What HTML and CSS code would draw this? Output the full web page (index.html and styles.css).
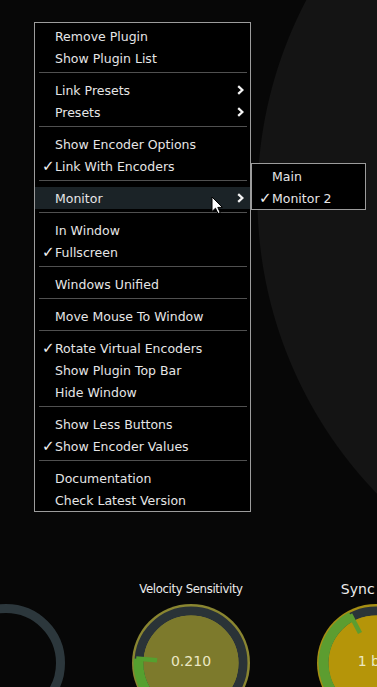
FILE: index.html
```html
<!DOCTYPE html>
<html lang="en">
<head>
  <meta charset="UTF-8" />
  <meta name="viewport" content="width=device-width, initial-scale=1" />
  <title>Plugin Menu</title>
  <link rel="stylesheet" href="styles.css">
</head>
<body>

<div class="view">
  <div class="display"></div>

  <div class="encoders">
    <div class="encoder">
      <div class="encoder-label"></div>
      <svg class="knob" viewBox="0 0 118 118" width="118" height="118">
        <circle cx="59" cy="59" r="54.5" fill="none" stroke="#2c373c" stroke-width="9"/>
      </svg>
    </div>

    <div class="encoder">
      <div class="encoder-label encoder-label-long">Velocity Sensitivity</div>
      <svg class="knob" viewBox="0 0 118 118" width="118" height="118">
        <circle cx="59" cy="59" r="59" fill="#8a8631"/>
        <circle cx="59" cy="59" r="52" fill="none" stroke="#2a3337" stroke-width="9"/>
        <circle cx="59" cy="59" r="47.5" fill="#7d7a2c"/>
        <path d="M21.88 96.12 A52.5 52.5 0 0 1 6.67 54.79" fill="none" stroke="#55a02f" stroke-width="10"/>
        <line x1="4.2" y1="54.6" x2="25.1" y2="56.3" stroke="#55a02f" stroke-width="4.5"/>
        <text class="knob-value" x="59" y="62" text-anchor="middle">0.210</text>
      </svg>
    </div>

    <div class="encoder">
      <div class="encoder-label">Sync Rate</div>
      <svg class="knob" viewBox="0 0 118 118" width="118" height="118">
        <circle cx="59" cy="59" r="59" fill="#a58e14"/>
        <circle cx="59" cy="59" r="52" fill="none" stroke="#2a3438" stroke-width="9"/>
        <circle cx="59" cy="59" r="47.5" fill="#b59509"/>
        <path d="M21.88 96.12 A52.5 52.5 0 0 1 34.35 12.65" fill="none" stroke="#5c9d30" stroke-width="10"/>
        <line x1="33.2" y1="10.4" x2="43" y2="29" stroke="#5c9d30" stroke-width="4.5"/>
        <text class="knob-value" x="59" y="62" text-anchor="middle">1 bar</text>
      </svg>
    </div>
  </div>
</div>

<div class="context-menu">
  <div class="menu-item"><span class="mark"></span><span class="item-label">Remove Plugin</span></div>
  <div class="menu-item"><span class="mark"></span><span class="item-label">Show Plugin List</span></div>
  <div class="separator"></div>
  <div class="menu-item"><span class="mark"></span><span class="item-label">Link Presets</span>
    <svg class="arrow" viewBox="0 0 7 10" width="7" height="10"><polyline points="1.2,1.2 5.4,5 1.2,8.8"/></svg></div>
  <div class="menu-item"><span class="mark"></span><span class="item-label">Presets</span>
    <svg class="arrow" viewBox="0 0 7 10" width="7" height="10"><polyline points="1.2,1.2 5.4,5 1.2,8.8"/></svg></div>
  <div class="separator"></div>
  <div class="menu-item"><span class="mark"></span><span class="item-label">Show Encoder Options</span></div>
  <div class="menu-item"><span class="mark">✓</span><span class="item-label">Link With Encoders</span></div>
  <div class="separator"></div>
  <div class="menu-item active"><span class="mark"></span><span class="item-label">Monitor</span>
    <svg class="arrow" viewBox="0 0 7 10" width="7" height="10"><polyline points="1.2,1.2 5.4,5 1.2,8.8"/></svg></div>
  <div class="separator"></div>
  <div class="menu-item"><span class="mark"></span><span class="item-label">In Window</span></div>
  <div class="menu-item"><span class="mark">✓</span><span class="item-label">Fullscreen</span></div>
  <div class="separator"></div>
  <div class="menu-item"><span class="mark"></span><span class="item-label">Windows Unified</span></div>
  <div class="separator"></div>
  <div class="menu-item"><span class="mark"></span><span class="item-label">Move Mouse To Window</span></div>
  <div class="separator"></div>
  <div class="menu-item"><span class="mark">✓</span><span class="item-label">Rotate Virtual Encoders</span></div>
  <div class="menu-item"><span class="mark"></span><span class="item-label">Show Plugin Top Bar</span></div>
  <div class="menu-item"><span class="mark"></span><span class="item-label">Hide Window</span></div>
  <div class="separator"></div>
  <div class="menu-item"><span class="mark"></span><span class="item-label">Show Less Buttons</span></div>
  <div class="menu-item"><span class="mark">✓</span><span class="item-label">Show Encoder Values</span></div>
  <div class="separator"></div>
  <div class="menu-item"><span class="mark"></span><span class="item-label">Documentation</span></div>
  <div class="menu-item"><span class="mark"></span><span class="item-label">Check Latest Version</span></div>
</div>

<div class="context-menu submenu">
  <div class="menu-item"><span class="mark"></span><span class="item-label">Main</span></div>
  <div class="menu-item"><span class="mark">✓</span><span class="item-label">Monitor 2</span></div>
</div>

<svg class="cursor" viewBox="0 0 13 19" width="13" height="19">
  <path d="M1 1 L1 15.5 L4.5 12.2 L7 17.6 L9.2 16.6 L6.8 11.4 L11.4 11.4 Z" fill="#fff" stroke="#000" stroke-width="1"/>
</svg>

</body>
</html>
```

FILE: styles.css
```css
body {
  margin: 0;
  padding: 0;
  font-family: 'DejaVu Sans', Verdana, sans-serif;
  color: #e6e6e6;
  background: radial-gradient(circle 426px at 683px 198px, #141414 425px, #070707 426px);
  background-color: #070707;
  overflow: hidden;
}

.view {
  height: 100vh;
  display: flex;
  flex-direction: column;
  overflow: hidden;
}

.display {
  flex: 0 0 581px;
}

.encoders {
  display: flex;
  gap: 67px;
  margin-left: -53px;
}

.encoder {
  flex: 0 0 118px;
  display: flex;
  flex-direction: column;
  align-items: center;
  gap: 7px;
}

.encoder-label {
  height: 16px;
  line-height: 16px;
  font-size: 14px;
  color: #ececec;
  white-space: nowrap;
}

.encoder-label-long {
  font-family: 'DejaVu Sans Condensed', 'DejaVu Sans', sans-serif;
  font-size: 13px;
  letter-spacing: -0.35px;
}

.knob {
  display: block;
  flex: none;
}

.knob-value {
  font-family: 'DejaVu Sans', sans-serif;
  font-size: 14px;
  fill: #ebe8c4;
}

/* popup menu */
.context-menu {
  position: absolute;
  left: 34px;
  top: 22px;
  width: 215px;
  padding-top: 2px;
  background: #000;
  border: 1px solid #9c9c9c;
  font-size: 12.5px;
}

.submenu {
  left: 251px;
  top: 163px;
  width: 113px;
  padding-top: 1px;
}

.menu-item {
  display: flex;
  align-items: center;
  height: 22px;
  padding-right: 6px;
  white-space: nowrap;
}

.menu-item.active {
  background: #1b2327;
}

.mark {
  flex: 0 0 20px;
  box-sizing: border-box;
  padding-left: 7px;
  font-size: 15px;
  line-height: 22px;
  color: #f2f2f2;
}

.item-label {
  flex: 1;
}

.arrow {
  display: block;
}

.arrow polyline {
  fill: none;
  stroke: #f4f4f4;
  stroke-width: 2.3;
}

.separator {
  height: 1px;
  margin: 3px 3px 6px 4px;
  background: #505050;
}

.cursor {
  position: absolute;
  left: 211px;
  top: 196px;
}
```
